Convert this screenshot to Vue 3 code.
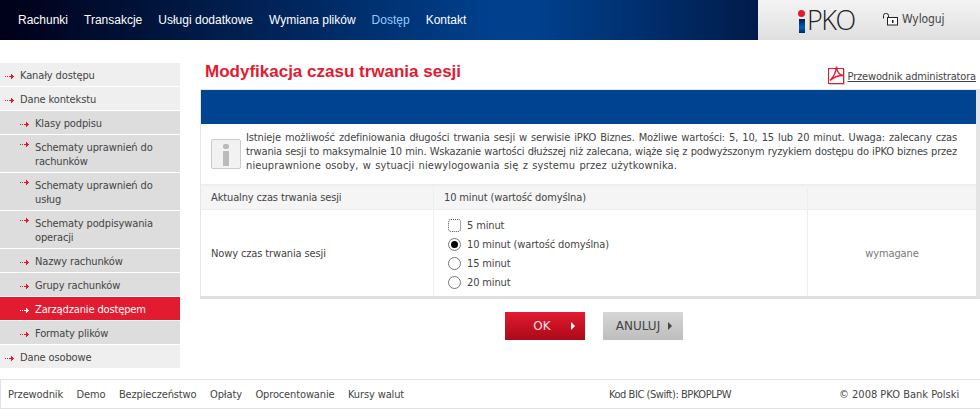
<script setup>
const nav = [
  { t: 'Rachunki' }, { t: 'Transakcje' }, { t: 'Usługi dodatkowe' },
  { t: 'Wymiana plików' }, { t: 'Dostęp', active: true }, { t: 'Kontakt' }
]
const side = [
  { t: 'Kanały dostępu', top: true },
  { t: 'Dane kontekstu', top: true },
  { t: 'Klasy podpisu' },
  { t: 'Schematy uprawnień do rachunków', two: true },
  { t: 'Schematy uprawnień do usług', two: true },
  { t: 'Schematy podpisywania operacji', two: true },
  { t: 'Nazwy rachunków' },
  { t: 'Grupy rachunków' },
  { t: 'Zarządzanie dostępem', active: true },
  { t: 'Formaty plików' },
  { t: 'Dane osobowe', top: true }
]
const options = [
  { t: '5 minut', focus: true },
  { t: '10 minut (wartość domyślna)', checked: true },
  { t: '15 minut' },
  { t: '20 minut' }
]
const foot = ['Przewodnik', 'Demo', 'Bezpieczeństwo', 'Opłaty', 'Oprocentowanie', 'Kursy walut']
</script>

<template>
  <div class="page">
    <header class="top">
      <nav class="nav">
        <a v-for="n in nav" :key="n.t" :class="{ on: n.active }">{{ n.t }}</a>
      </nav>
      <div class="brand">
        <div class="logo"><span class="i"></span><span class="pko">PKO</span></div>
        <div class="logout">
          <svg width="16" height="13" viewBox="0 0 16 13"><path d="M.5 5.500V2.500a2 2 0 0 1 2-2h1a2 2 0 0 1 2 2v2" fill="none" stroke="#222"/><rect x="4.500" y="4.500" width="10" height="7.500" fill="#fff" stroke="#222"/><rect x="9" y="7" width="1.500" height="3" fill="#222"/></svg>
          <span>Wyloguj</span>
        </div>
      </div>
    </header>

    <div class="body">
      <aside class="side">
        <a v-for="s in side" :key="s.t" class="item" :class="{ top: s.top, two: s.two, active: s.active }">
          <svg class="arr" width="9" height="5" viewBox="0 0 9 5"><path d="M0 2h1v1H0zM2 2h1v1H2zM4 2h2V0h1v1h1v1h1v1H8v1H7v1H6V3H4z" /></svg>
          <span>{{ s.t }}</span>
        </a>
      </aside>

      <main class="main">
        <div class="title-row">
          <h1>Modyfikacja czasu trwania sesji</h1>
          <a class="guide">
            <svg width="18" height="20" viewBox="0 0 18 20"><rect x="2" y="4" width="16" height="16" fill="#ccc"/><rect x="1.500" y="3.500" width="15" height="15" fill="#fff" stroke="#e3192f"/><path d="M3 15.500C6 12.500 9 8 9.500 1.500 10 7 12 10 16 10.500 12 10.500 7 12 3 15.500z" fill="none" stroke="#e3192f" stroke-width="1.400"/></svg>
            <span>Przewodnik administratora</span>
          </a>
        </div>
        <div class="panel">
          <div class="bar"></div>
          <div class="info">
            <div class="info-ic"><span class="dot"></span><span class="stem"></span></div>
            <p>
              <span class="ln">Istnieje możliwość zdefiniowania długości trwania sesji w serwisie iPKO Biznes. Możliwe wartości: 5, 10, 15 lub 20 minut. Uwaga: zalecany czas</span>
              <span class="ln mid">trwania sesji to maksymalnie 10 min. Wskazanie wartości dłuższej niż zalecana, wiąże się z podwyższonym ryzykiem dostępu do iPKO biznes przez</span>
              <span class="ln last">nieuprawnione osoby, w sytuacji niewylogowania się z systemu przez użytkownika.</span>
            </p>
          </div>
          <div class="row head">
            <div class="c1">Aktualny czas trwania sesji</div>
            <div class="c2">10 minut (wartość domyślna)</div>
            <div class="c3"></div>
          </div>
          <div class="row form">
            <div class="c1">Nowy czas trwania sesji</div>
            <div class="c2 opts">
              <label v-for="o in options" :key="o.t" class="opt">
                <span class="radio" :class="{ focus: o.focus, checked: o.checked }"></span>
                <span>{{ o.t }}</span>
              </label>
            </div>
            <div class="c3 req">wymagane</div>
          </div>
        </div>
        <div class="actions">
          <button class="btn ok"><span>OK</span><i></i></button>
          <button class="btn cancel"><span>ANULUJ</span><i></i></button>
        </div>
      </main>
    </div>

    <footer class="foot">
      <div class="links"><a v-for="f in foot" :key="f">{{ f }}</a></div>
      <div class="bic">Kod BIC (Swift): BPKOPLPW</div>
      <div class="copy">© 2008 PKO Bank Polski</div>
    </footer>
  </div>
</template>

<style>
html, body { margin: 0; background: #fff; }
</style>

<style scoped>
.page { width: 980px; height: 410px; overflow: hidden; background: #fff; font: 11px "DejaVu Sans Condensed", "DejaVu Sans", Tahoma, sans-serif; letter-spacing: -.13px; color: #444; position: relative; }
a { cursor: pointer; }

.top { height: 40px; display: flex; background: linear-gradient(90deg, #000018 0%, #00408c 50%, #00408c 55%, #001a48 78%); }
.nav { flex: 1; display: flex; gap: 16px; padding-left: 18px; align-items: center; font: 12px "Liberation Sans", Arial, sans-serif; letter-spacing: 0; color: #fff; }
.nav .on { color: #90ccff; }
.brand { width: 222px; display: flex; align-items: center; background: linear-gradient(#f4f4f4, #dfdfdf); }
.logo { display: flex; align-items: center; margin-left: 41px; width: 56px; height: 24px; position: relative; color: #222; }
.logo .i { position: relative; display: block; width: 6px; height: 14px; margin-top: 12px; background: linear-gradient(#001e50, #0060b0 60%, #002a60); }
.logo .i::before { content: ""; position: absolute; left: -1px; top: -9px; width: 7px; height: 7px; border-radius: 50%; background: #e3192f; }
.logo .pko { font: 300 27px "Open Sans", sans-serif; line-height: 24px; margin-left: 2px; letter-spacing: -1.500px; }
.logout { display: flex; align-items: center; gap: 3px; margin: -2px 0 0 28px; font-size: 12px; letter-spacing: -.1px; color: #444; }

.body { display: flex; height: 339px; }
.side { width: 180px; padding-top: 23px; display: flex; flex-direction: column; }
.item { display: flex; align-items: center; height: 23px; margin-bottom: 1px; background: #ddd; padding-left: 20px; gap: 6px; color: #444; line-height: 14px; box-sizing: border-box; padding-top: 3px; }
.item.two { height: 37px; }
.item.top { background: #efefef; padding-left: 5px; }
.item.active { background: #e31b31; color: #fff; }
.arr { fill: #e3192f; flex: none; }
.two .arr { align-self: flex-start; margin-top: 4px; }
.active .arr { fill: #fff; }

.main { width: 780px; margin-left: 20px; }
.title-row { height: 49px; display: flex; justify-content: space-between; align-items: flex-end; padding-right: 4px; }
h1 { margin: 0 0 7px 5px; font: bold 17px "Liberation Sans", Arial, sans-serif; letter-spacing: 0; color: #e31b31; }
.guide { display: flex; align-items: flex-end; gap: 3px; margin-bottom: 4px; text-decoration: underline; line-height: 18px; letter-spacing: -.16px; }
.guide span { margin-bottom: -1px; }
.panel { border-left: 1px solid #e6e6e6; border-top: 1px solid #e6e6e6; border-right: 4px solid #e4e4e4; border-bottom: 3px solid #e0e0e0; }
.bar { height: 34px; background: #004390; }
.info { height: 61px; box-sizing: border-box; display: flex; align-items: center; padding-left: 10px; border-bottom: 1px solid #eee; }
.info-ic { width: 30px; height: 30px; border: 1px solid #ccc; border-radius: 2px; background: #f2f2f2; display: flex; flex-direction: column; align-items: center; padding-top: 4px; box-sizing: border-box; flex: none; }
.dot { width: 6px; height: 5px; background: #bbb; border-radius: 2px; margin-bottom: 2px; }
.stem { width: 6px; height: 15px; background: #bbb; }
.info p { margin: -4px 0 0 5px; line-height: 13.700px; }
.ln { display: block; width: 711px; text-align-last: justify; }
.ln.mid { letter-spacing: -.18px; }
.ln.last { width: 431px; letter-spacing: .12px; }
.row { display: flex; }
.c1 { width: 233px; padding-left: 10px; box-sizing: border-box; border-right: 1px solid #eee; display: flex; align-items: center; }
.c2 { width: 374px; padding-left: 10px; box-sizing: border-box; border-right: 1px solid #eee; display: flex; align-items: center; }
.c3 { flex: 1; display: flex; align-items: center; justify-content: center; }
.head { height: 25px; box-sizing: border-box; background: #f5f5f5; border-bottom: 1px solid #eee; border-top: 1px solid #eee; }
.form { height: 86px; }
.opts { flex-direction: column; align-items: flex-start; justify-content: center; padding-left: 14px; padding-top: 1px; }
.opt { display: flex; align-items: center; gap: 6px; height: 19px; }
.radio { width: 11px; height: 11px; border: 1px solid #777; border-radius: 50%; background: #fff; display: block; position: relative; }
.radio.focus { border: 1px dotted #555; border-radius: 3px; }
.radio.checked::after { content: ""; position: absolute; left: 2px; top: 2px; width: 7px; height: 7px; background: #000; border-radius: 50%; }
.req { color: #777; }

.actions { display: flex; justify-content: center; gap: 18px; padding-top: 13px; margin-left: 8px; }
.btn { width: 80px; height: 28px; border: 0; padding: 0; font: 12px "DejaVu Sans", sans-serif; position: relative; display: block; }
.btn i { position: absolute; top: 10px; width: 0; height: 0; border-left: 4px solid; border-top: 4px solid transparent; border-bottom: 4px solid transparent; }
.ok { background: linear-gradient(#e31b31, #aa0a18); color: #f8e0e0; }
.ok i { right: 10px; color: #fff; }
.ok span { margin-right: 6px; }
.cancel { background: linear-gradient(#d6d6d6, #bdbdbd); color: #444; }
.cancel span { margin-right: 10px; }
.cancel i { right: 11px; color: #444; }

.foot { position: absolute; left: 0; right: 0; top: 379px; height: 30px; border: 1px solid #e2e2e2; border-right: 0; box-sizing: border-box; display: flex; align-items: center; padding-left: 7px; }
.links { display: flex; gap: 13.500px; width: 601px; }
.bic { width: 230px; letter-spacing: -.45px; }
.copy { letter-spacing: 0; }
</style>
